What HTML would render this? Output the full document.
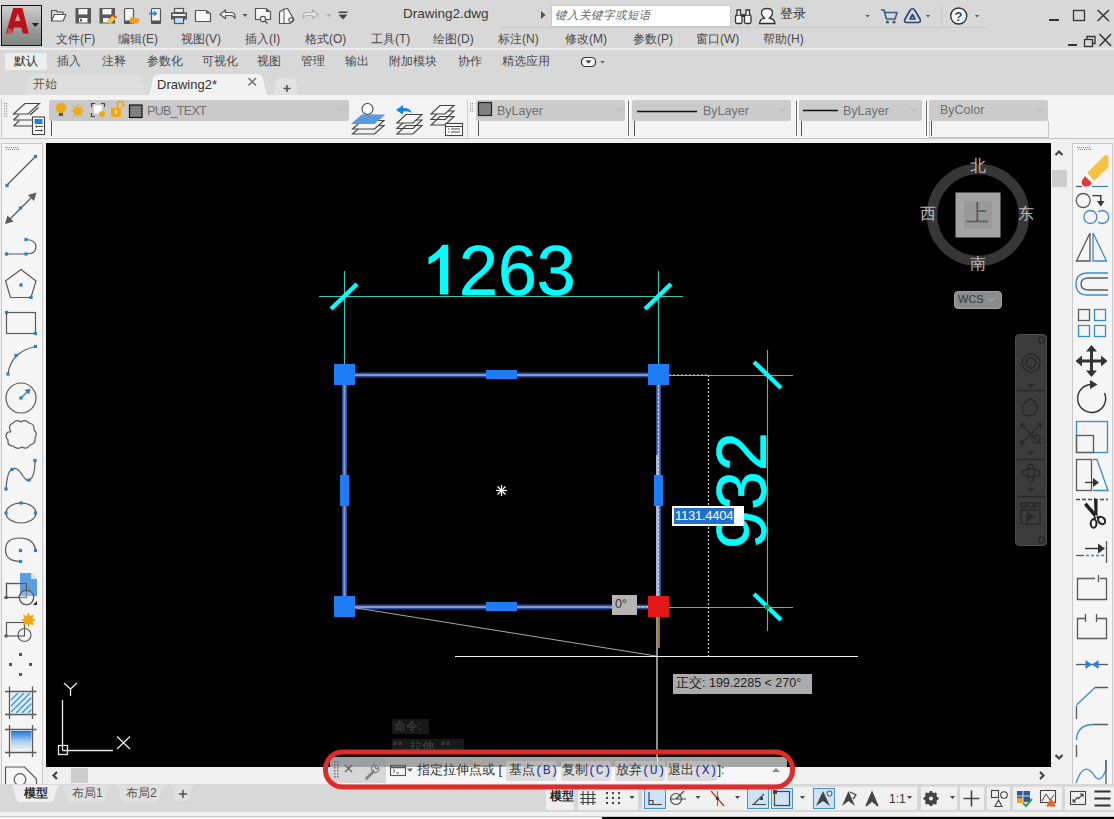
<!DOCTYPE html>
<html><head><meta charset="utf-8">
<style>
*{margin:0;padding:0;box-sizing:border-box}
html,body{width:1114px;height:819px;overflow:hidden;background:#d9d9d9;font-family:"Liberation Sans",sans-serif;position:relative}
.a{position:absolute}
.t{position:absolute;white-space:nowrap;line-height:1}
svg{position:absolute;overflow:visible}
</style></head><body>
<!-- title bar -->
<div class="a" style="left:0;top:0;width:1114px;height:49px;background:#d8d8d8"></div>
<div class="a" style="left:0;top:48px;width:1114px;height:2px;background:#ececec"></div>
<!-- ribbon tabs row -->
<div class="a" style="left:0;top:50px;width:1114px;height:22px;background:#d8d8d8"></div>
<div class="a" style="left:5px;top:53px;width:42px;height:17px;background:#eeeeee"></div>
<!-- file tabs row -->
<div class="a" style="left:0;top:72px;width:1114px;height:23px;background:#d8d8d8"></div>
<!-- toolbar row -->
<div class="a" style="left:0;top:98px;width:1114px;height:41px;background:#f3f3f3;border-bottom:1px solid #c4c4c4"></div>
<div class="a" style="left:0;top:139px;width:1114px;height:4px;background:#f0f0f0"></div>
<div class="t" style="left:56px;top:33px;font-size:12px;color:#4a4a4a;">文件(F)</div>
<div class="t" style="left:118px;top:33px;font-size:12px;color:#4a4a4a;">编辑(E)</div>
<div class="t" style="left:181px;top:33px;font-size:12px;color:#4a4a4a;">视图(V)</div>
<div class="t" style="left:245px;top:33px;font-size:12px;color:#4a4a4a;">插入(I)</div>
<div class="t" style="left:305px;top:33px;font-size:12px;color:#4a4a4a;">格式(O)</div>
<div class="t" style="left:371px;top:33px;font-size:12px;color:#4a4a4a;">工具(T)</div>
<div class="t" style="left:433px;top:33px;font-size:12px;color:#4a4a4a;">绘图(D)</div>
<div class="t" style="left:498px;top:33px;font-size:12px;color:#4a4a4a;">标注(N)</div>
<div class="t" style="left:565px;top:33px;font-size:12px;color:#4a4a4a;">修改(M)</div>
<div class="t" style="left:633px;top:33px;font-size:12px;color:#4a4a4a;">参数(P)</div>
<div class="t" style="left:696px;top:33px;font-size:12px;color:#4a4a4a;">窗口(W)</div>
<div class="t" style="left:763px;top:33px;font-size:12px;color:#4a4a4a;">帮助(H)</div>
<div class="t" style="left:14px;top:55px;font-size:12px;color:#222;">默认</div>
<div class="t" style="left:57px;top:55px;font-size:12px;color:#4a4a4a;">插入</div>
<div class="t" style="left:102px;top:55px;font-size:12px;color:#4a4a4a;">注释</div>
<div class="t" style="left:147px;top:55px;font-size:12px;color:#4a4a4a;">参数化</div>
<div class="t" style="left:202px;top:55px;font-size:12px;color:#4a4a4a;">可视化</div>
<div class="t" style="left:257px;top:55px;font-size:12px;color:#4a4a4a;">视图</div>
<div class="t" style="left:301px;top:55px;font-size:12px;color:#4a4a4a;">管理</div>
<div class="t" style="left:345px;top:55px;font-size:12px;color:#4a4a4a;">输出</div>
<div class="t" style="left:389px;top:55px;font-size:12px;color:#4a4a4a;">附加模块</div>
<div class="t" style="left:458px;top:55px;font-size:12px;color:#4a4a4a;">协作</div>
<div class="t" style="left:502px;top:55px;font-size:12px;color:#4a4a4a;">精选应用</div>
<div class="t" style="left:403px;top:7px;font-size:13.5px;color:#3a3a3a;">Drawing2.dwg</div>
<div class="t" style="left:780px;top:7px;font-size:13px;color:#333;">登录</div>

<svg width="30" height="20" style="left:578px;top:52px"><rect x="3.5" y="5.5" width="14" height="9" rx="4" fill="#fafafa" stroke="#333" stroke-width="1.2"/><path d="M7.5 8.5 H13.5 L10.5 11.5 Z" fill="#333"/><path d="M22.5 9 H26.5 L24.5 11.5 Z" fill="#555"/></svg>
<!-- title icons -->
<div class="a" style="left:1px;top:5px;width:41px;height:41px;border:1px solid #111;background:linear-gradient(#cfcfcf,#9a9a9a 60%,#7f8583)"></div>
<svg width="1114" height="50" style="left:0;top:0">
<path d="M6 33.6 L13.2 8 H22.4 L28.7 33.6 H22.8 L21.3 27.5 H13.9 L12.2 33.6 Z M15.2 21 H20.2 L17.7 14 Z" fill="#b8121a"/>
<path d="M15.2 21 H20.2 L17.7 14 Z" fill="#e0a0a0"/><path d="M7 33 L8.5 28 L12.5 30 L12 33.6 Z" fill="#d87a80" opacity="0.6"/>
<path d="M31.7 23 H39 L35.3 27 Z" fill="#222"/>
<!-- open -->
<g fill="none" stroke="#555" stroke-width="1.2" stroke-linejoin="round">
<path d="M51.5 21 V10.5 H56 L57.5 12 H63 V14.5"/>
<path d="M51.5 21 L54.5 14.5 H66 L63 21 Z" fill="#fff"/>
</g>
<!-- save -->
<rect x="75.5" y="8" width="15.5" height="15.5" fill="#585858"/>
<rect x="78.5" y="9" width="9" height="5.5" fill="#f4f4f4"/>
<rect x="79" y="18" width="8.5" height="4.5" fill="#f4f4f4"/>
<rect x="80" y="19" width="2" height="2.5" fill="#585858"/>
<!-- saveas -->
<rect x="99.5" y="8" width="15.5" height="15.5" fill="#585858"/>
<rect x="102.5" y="9" width="9" height="5.5" fill="#f4f4f4"/>
<rect x="103" y="18" width="6" height="4.5" fill="#f4f4f4"/>
<path d="M107 21.5 L112.5 15.5 L116 18.5 L110.5 24 Z" fill="#f2c230"/>
<path d="M112.5 15.5 L114 14 L117 17 L116 18.5 Z" fill="#e04040"/>
<!-- mobile open -->
<rect x="124.5" y="8.5" width="9" height="15" rx="1" fill="#f4f4f4" stroke="#555" stroke-width="1.2"/>
<rect x="124.5" y="20.5" width="9" height="3" fill="#555"/>
<path d="M130 17.5 H134 L135 18.5 H140 L138.5 23.5 H130 Z" fill="#f0a020"/>
<!-- mobile save -->
<rect x="151.5" y="8.5" width="9" height="15" rx="1" fill="#f4f4f4" stroke="#555" stroke-width="1.2"/>
<rect x="151.5" y="20.5" width="9" height="3" fill="#555"/>
<path d="M149 12.5 H154 V10.5 L157.5 13.5 L154 16.5 V14.5 H149 Z" fill="#2a8ae0"/>
<!-- print -->
<rect x="174.5" y="8.5" width="9" height="4" fill="#f4f4f4" stroke="#555" stroke-width="1.2"/>
<rect x="171" y="12.5" width="16" height="7" fill="#585858"/>
<rect x="172.5" y="14" width="13" height="2" fill="#f0f0f0"/>
<rect x="174.5" y="17.5" width="9" height="6" fill="#bfe0f8" stroke="#555" stroke-width="1.2"/>
<!-- publish -->
<path d="M195.5 10.5 H206 L210.5 13.5 V21.5 H195.5 Z" fill="#f6f6f6" stroke="#555" stroke-width="1.2"/>
<path d="M206 10.5 L210.5 13.5 H206 Z" fill="#555"/>
<!-- undo -->
<path d="M220 14.5 L225.5 10 V12.5 H231 Q235 12.5 235 16.5 V18.5 Q233.5 15.5 231 15.5 H225.5 V18.5 Z" fill="#f8f8f8" stroke="#555" stroke-width="1.2" stroke-linejoin="round"/>
<path d="M242.5 14 H247.5 L245 17 Z" fill="#555"/>
<!-- plot preview -->
<path d="M255.5 8.5 H266 L270.5 12 V19.5 H255.5 Z" fill="#f6f6f6" stroke="#555" stroke-width="1.2"/>
<path d="M266 8.5 L270.5 12 H266 Z" fill="#555"/>
<circle cx="263" cy="19" r="2.6" fill="#f6f6f6" stroke="#555" stroke-width="1.2"/>
<line x1="265" y1="21" x2="267.5" y2="23.5" stroke="#555" stroke-width="1.3"/>
<!-- sheet set -->
<path d="M279.5 12 L284 9 L287.5 8.5 L294 19.5 L290 23.5 H279.5 Z" fill="#f6f6f6" stroke="#555" stroke-width="1.2" stroke-linejoin="round"/>
<path d="M284 9 V23" stroke="#555" stroke-width="1" fill="none"/>
<circle cx="291" cy="20" r="2.2" fill="none" stroke="#555" stroke-width="1.1"/>
<!-- redo -->
<path d="M318 14.5 L312.5 10 V12.5 H307 Q303 12.5 303 16.5 V18.5 Q304.5 15.5 307 15.5 H312.5 V18.5 Z" fill="#e8e8e8" stroke="#b0b0b0" stroke-width="1.2" stroke-linejoin="round"/>
<path d="M326.5 14 H331.5 L329 17 Z" fill="#aaa"/>
<!-- customize -->
<rect x="338.5" y="11.5" width="9" height="1.5" fill="#444"/>
<path d="M338.5 14.5 H347.5 L343 19.5 Z" fill="#444"/>
<!-- play arrow -->
<path d="M541 11 L545.5 15 L541 19 Z" fill="#555"/>
<!-- binoculars -->
<g fill="#f4f4f4" stroke="#333" stroke-width="1.3">
<rect x="735.5" y="15" width="6.5" height="8.5" rx="1.5"/>
<rect x="744.5" y="15" width="6.5" height="8.5" rx="1.5"/>
<path d="M737 15 V10 H740.5 V15 M746 15 V10 H749.5 V15"/>
</g>
<rect x="741.5" y="14" width="3.5" height="3" fill="#333"/>
<!-- user -->
<g fill="#f6f6f6" stroke="#333" stroke-width="1.3">
<path d="M759.5 23.5 Q760 19 764.5 18 Q761.5 16 761.5 12.5 Q761.5 8.5 767 8.5 Q772.5 8.5 772.5 12.5 Q772.5 16 769.5 18 Q774.5 19 775 23.5 Z"/>
</g>
<path d="M865.5 15 H869.5 L867.5 17.5 Z" fill="#555"/>
<!-- cart -->
<g fill="none" stroke="#3a5d80" stroke-width="1.6" stroke-linejoin="round">
<path d="M881 10 H884 L886.5 19 H895 L897 12.5 H885"/>
</g>
<circle cx="887.5" cy="22" r="1.6" fill="#3a5d80"/>
<circle cx="894" cy="22" r="1.6" fill="#3a5d80"/>
<!-- a360 -->
<g fill="none" stroke="#2a4670" stroke-width="1.6" stroke-linejoin="round">
<path d="M910 10.5 Q912.5 7 915 10.5 L920 19 Q921.5 22.5 918 22.5 H907 Q903.5 22.5 905 19 Z"/>
<path d="M912.5 14.5 L910 19 H915 Z"/>
</g>
<path d="M926 15 H930 L928 17.5 Z" fill="#555"/>
<line x1="941.5" y1="6" x2="941.5" y2="25" stroke="#c4c4c4"/>
<!-- help -->
<circle cx="958.7" cy="16" r="8" fill="#fafafa" stroke="#333" stroke-width="1.4"/>
<text x="954.5" y="21" font-family="Liberation Sans" font-weight="bold" font-size="13" fill="#1a4fa0">?</text>
<path d="M975 15 H979 L977 17.5 Z" fill="#555"/>
<line x1="500" y1="27.5" x2="985" y2="27.5" stroke="#c8c8c8"/>
<!-- window controls -->
<rect x="1049" y="19" width="10" height="2" fill="#333"/>
<rect x="1073.5" y="10.5" width="11" height="10" fill="none" stroke="#333" stroke-width="1.3"/>
<path d="M1097.5 10 L1109 21 M1109 10 L1097.5 21" stroke="#333" stroke-width="1.5"/>
<rect x="1068" y="44" width="9" height="2" fill="#333"/>
<rect x="1084.5" y="39.5" width="8" height="7" fill="none" stroke="#333" stroke-width="1.3"/>
<path d="M1087 39.5 V36.5 H1095 V43.5 H1092.5" fill="none" stroke="#333" stroke-width="1.3"/>
<path d="M1099.5 34 L1111 46 M1111 34 L1099.5 46" stroke="#333" stroke-width="1.5"/>
</svg>
<div class="a" style="left:551px;top:5px;width:180px;height:22px;background:#fff;border:1px solid #c8c8c8"></div>
<div class="t" style="left:555px;top:10px;font-size:11.5px;color:#666;font-style:italic">键入关键字或短语</div>

<!-- file tabs -->
<svg width="320" height="27" style="left:0;top:72px">
<path d="M20 25 Q24 25 25 20 L28 6 Q30 2 36 2 H136 Q141 2 142 6 L145 20 Q146 25 150 25 Z" fill="#dedede"/>
<path d="M144 26 Q149 26 150 20 L153 6 Q155 2 161 2 H256 Q262 2 263 6 L266 20 Q267 26 273 26 Z" fill="#f2f2f2"/>
<path d="M270 25 Q273 25 274 20 L276 9 Q277 6 281 6 H292 Q296 6 296 9 L297 20 Q298 25 301 25 Z" fill="#e2e2e2"/>
<path d="M248.5 78 L256 85.5 M256 78 L248.5 85.5" transform="translate(0,-72)" stroke="#777" stroke-width="1.6"/>
<path d="M287 13 V20 M283.5 16.5 H290.5" stroke="#555" stroke-width="1.6"/>
</svg>
<div class="a" style="left:0;top:95px;width:1114px;height:5px;background:#f2f2f2"></div>
<div class="t" style="left:33px;top:78px;font-size:12px;color:#555">开始</div>
<div class="t" style="left:157px;top:78px;font-size:13px;color:#333">Drawing2*</div>
<!-- toolbar row content -->
<div class="a" style="left:1px;top:99px;width:1048px;height:40px;border-left:1px solid #c8c8c8"></div>
<div class="a" style="left:49px;top:100px;width:300px;height:21px;background:#c9c9c9;border-radius:2px"></div>
<div class="a" style="left:51px;top:121px;width:1px;height:15px;background:#555"></div>
<div class="a" style="left:476px;top:100px;width:149px;height:21px;background:#cbcbcb;border-radius:2px"></div>
<div class="a" style="left:478px;top:121px;width:1px;height:15px;background:#555"></div>
<div class="a" style="left:632px;top:100px;width:159px;height:21px;background:#cbcbcb;border-radius:2px"></div>
<div class="a" style="left:634px;top:121px;width:1px;height:15px;background:#555"></div>
<div class="a" style="left:799px;top:100px;width:123px;height:21px;background:#cbcbcb;border-radius:2px"></div>
<div class="a" style="left:801px;top:121px;width:1px;height:15px;background:#555"></div>
<div class="a" style="left:929px;top:100px;width:119px;height:21px;background:#cbcbcb;border-radius:2px"></div>
<div class="a" style="left:929px;top:121px;width:120px;height:17px;border:1px solid #c4c4c4;border-top:none;background:#f3f3f3"></div>
<div class="a" style="left:931px;top:121px;width:1px;height:15px;background:#555"></div>
<div class="t" style="left:147px;top:105px;font-size:12.5px;color:#707070;letter-spacing:-0.7px">PUB_TEXT</div>
<div class="t" style="left:497px;top:105px;font-size:12.5px;color:#707070">ByLayer</div>
<div class="t" style="left:703px;top:105px;font-size:12.5px;color:#707070">ByLayer</div>
<div class="t" style="left:843px;top:105px;font-size:12.5px;color:#707070">ByLayer</div>
<div class="t" style="left:940px;top:104px;font-size:12.5px;color:#707070">ByColor</div>
<svg width="1114" height="50" style="left:0;top:96px">
<g fill="#999"><rect x="4" y="7" width="1.2" height="1.2"/><rect x="6" y="7" width="1.2" height="1.2"/><rect x="4" y="9.5" width="1.2" height="1.2"/><rect x="6" y="9.5" width="1.2" height="1.2"/><rect x="4" y="12" width="1.2" height="1.2"/><rect x="6" y="12" width="1.2" height="1.2"/><rect x="4" y="14.5" width="1.2" height="1.2"/><rect x="6" y="14.5" width="1.2" height="1.2"/><rect x="4" y="17" width="1.2" height="1.2"/><rect x="6" y="17" width="1.2" height="1.2"/><rect x="4" y="19.5" width="1.2" height="1.2"/><rect x="6" y="19.5" width="1.2" height="1.2"/></g>
<g fill="none" stroke="#444" stroke-width="1.1">
<path d="M13.5 18 L25 7.5 H39.5 L28 18 Z" fill="#f6f6f6"/>
<path d="M13.5 24 L19 19 M30 19 L38.5 11.5"/>
<path d="M13.5 24 H32 M13.5 30 L19 25 M13.5 30 H32"/>
</g>
<rect x="32.5" y="21" width="12" height="17.5" fill="#fff" stroke="#444" stroke-width="1.1"/>
<rect x="34.5" y="23" width="8" height="5" fill="#1a82e8"/>
<path d="M36 30.5 H43 M35 34.5 H42" stroke="#444" stroke-width="1"/><path d="M35 30.5 L37 29 V32 Z M43 34.5 L41 33 V36 Z" fill="#444"/>
<!-- bulb -->
<circle cx="61" cy="12" r="5.2" fill="#f2a81a"/>
<rect x="59" y="17" width="4" height="3" fill="#555"/>
<!-- sun -->
<circle cx="77.8" cy="15" r="4.5" fill="#f2a81a"/>
<g stroke="#f2a81a" stroke-width="1.2"><path d="M77.8 8 V10 M77.8 20 V22 M71 15 H73 M82.5 15 H84.5 M73 10 L74.4 11.4 M81.2 18.6 L82.6 20 M73 20 L74.4 18.6 M81.2 11.4 L82.6 10"/></g>
<!-- freeze vp -->
<path d="M91.5 11 V7.5 H95 M101 7.5 H104.5 V11 M91.5 17 V20.5 H95" fill="none" stroke="#444" stroke-width="1.2"/>
<rect x="94" y="9.5" width="8" height="8" fill="#fff"/>
<circle cx="102" cy="18" r="3" fill="#f2a81a"/>
<!-- lock -->
<rect x="111" y="12" width="10" height="9" fill="#f2a81a"/>
<path d="M117.5 12 V8.5 Q117.5 5.5 120.5 5.5 Q123.5 5.5 123.5 8.5 V11" fill="none" stroke="#f2a81a" stroke-width="2"/>
<rect x="115.5" y="14" width="1" height="4" fill="#fff"/>
<!-- color square -->
<rect x="129.5" y="9" width="12.5" height="12.5" fill="#808080" stroke="#111" stroke-width="1.2"/>
<rect x="478.5" y="6.5" width="13" height="13" fill="#808080" stroke="#222" stroke-width="1.2"/>
<line x1="637" y1="15.5" x2="697" y2="15.5" stroke="#111" stroke-width="1.3"/>
<line x1="803" y1="14.5" x2="838" y2="14.5" stroke="#111" stroke-width="1.3"/>
<g fill="none" stroke="#b0b0b0" stroke-width="1"><path d="M337 12 L340 15 L343 12 M616.5 12 L619.5 15 L622.5 12 M779 12 L782 15 L785 12 M911 12 L914 15 L917 12 M1037 12 L1040 15 L1043 12"/></g>
<!-- layer match etc -->
<g fill="none" stroke="#444" stroke-width="1.1">
<path d="M352.5 38 L362 29.5 H384 L374.5 38 Z"/>
<path d="M352.5 33 L362 24.5 H384 L374.5 33 Z" fill="#f6f6f6"/>
<path d="M352.5 27.5 L362 19 H384 L374.5 27.5 Z" fill="#5a9ae0" stroke="#5a9ae0"/>
<circle cx="367.5" cy="13" r="5.5" fill="#fff"/>
<path d="M397 38 L406 29.5 H422 L413 38 Z M397 32.5 L406 24 H422 L413 32.5 Z" />
<path d="M397 27 L406 18.5 H422 L413 27 Z" fill="#f6f6f6"/>
<path d="M431 29 L440 20.5 H454 L445 29 Z M431 23.5 L440 15 H454 L445 23.5 Z" />
<path d="M431 18 L440 9.5 H454 L445 18 Z" fill="#f6f6f6"/>
</g>
<path d="M396 14 L403 9 V12 Q410 11.5 412 17 Q408 14.5 403 15.5 V18.5 Z" fill="#1a82e8"/>
<rect x="445.5" y="27.5" width="17" height="12" fill="#fff" stroke="#444" stroke-width="1.1"/>
<path d="M445.5 30.5 H462.5 M448 33 H449.5 M451 33 H460 M448 36 H449.5 M451 36 H460" stroke="#444" stroke-width="1"/>
<line x1="467.5" y1="3" x2="467.5" y2="42" stroke="#d0d0d0"/>
<g fill="#999"><rect x="470" y="7" width="1.2" height="1.2"/><rect x="472" y="7" width="1.2" height="1.2"/><rect x="470" y="9.5" width="1.2" height="1.2"/><rect x="472" y="9.5" width="1.2" height="1.2"/><rect x="470" y="12" width="1.2" height="1.2"/><rect x="472" y="12" width="1.2" height="1.2"/><rect x="470" y="14.5" width="1.2" height="1.2"/><rect x="472" y="14.5" width="1.2" height="1.2"/></g>
<g stroke="#fafafa" stroke-width="3"><path d="M628.5 3 V41 M796.5 3 V41 M926.5 3 V41"/></g><g stroke="#6e6e6e" stroke-width="1"><path d="M628.5 4.5 V40 M796.5 4.5 V40 M926.5 4.5 V40"/></g>
</svg>
<!-- canvas -->
<div class="a" id="cv" style="left:46px;top:143px;width:1005px;height:624px;background:#000"></div>

<!-- canvas drawing -->
<svg class="a" style="left:0;top:0" width="1114" height="819" viewBox="0 0 1114 819">
<defs><clipPath id="cc"><rect x="46" y="143" width="1005" height="624"/></clipPath></defs>
<g clip-path="url(#cc)">
<!-- horizontal dimension -->
<g stroke="#3cc4b4" stroke-width="1.1" fill="none">
<line x1="319" y1="296.5" x2="683" y2="296.5"/>
<line x1="344.5" y1="271" x2="344.5" y2="374"/>
<line x1="658.5" y1="271" x2="658.5" y2="374"/>
<line x1="668" y1="375.5" x2="793" y2="375.5"/>
<line x1="669" y1="607.5" x2="793" y2="607.5"/>
<line x1="767.5" y1="350" x2="767.5" y2="631"/>
</g>
<g stroke="#00ffff" stroke-width="4.5" stroke-linecap="butt">
<line x1="331" y1="309" x2="357" y2="284"/>
<line x1="645" y1="309" x2="671" y2="284"/>
<line x1="754" y1="362" x2="781" y2="388"/>
<line x1="754" y1="594" x2="781" y2="620"/>
</g>
<circle cx="767" cy="607" r="2.5" fill="#1a9a3a"/>
<g fill="#00ffff" stroke="#00ffff" stroke-width="0.5" font-family="Liberation Sans" font-size="70">
<text x="459" y="294.5">263</text>
<path d="M440 294.5 V257 Q435 262 428.5 264.5 V257.5 Q438 252 442.5 244.8 H448.3 V294.5 Z" stroke="none"/>
<text transform="translate(765.5,549) rotate(-90)">932</text>
</g>
<!-- rectangle highlighted -->
<g fill="none">
<path d="M344.5 375 H658.5 V607 H344.5 Z" stroke="#2a4a9c" stroke-width="5"/>
<path d="M344.5 375 H658.5 V607 H344.5 Z" stroke="#8596c8" stroke-width="2"/>
</g>
<!-- dotted lines -->
<g stroke="#d0d0d0" stroke-width="1.2" stroke-dasharray="2 2" fill="none">
<line x1="669" y1="375" x2="708" y2="375"/>
<line x1="708.5" y1="375" x2="708.5" y2="657"/>
<line x1="658.5" y1="385" x2="658.5" y2="596"/>
<line x1="638" y1="606.5" x2="668" y2="606.5"/>
</g>
<!-- rubber band -->
<line x1="344" y1="606" x2="656" y2="656" stroke="#a8a8a8" stroke-width="1"/>
<line x1="455" y1="656.5" x2="858" y2="656.5" stroke="#f0f0f0" stroke-width="1.2"/>
<line x1="657" y1="455" x2="657" y2="767" stroke="#f0f0f0" stroke-width="1.2"/>
<line x1="659" y1="617" x2="659" y2="648" stroke="#c8a020" stroke-width="1.5"/>
<!-- grips -->
<g fill="#1e7cf5">
<rect x="334" y="364" width="21" height="21"/>
<rect x="648" y="364" width="21" height="21"/>
<rect x="334" y="596" width="21" height="21"/>
<rect x="486" y="370" width="31" height="9"/>
<rect x="486" y="602" width="31" height="9"/>
<rect x="340" y="475" width="9" height="31"/>
<rect x="654" y="475" width="9" height="31"/>
</g>
<rect x="648" y="596" width="21" height="21" fill="#e01818"/>
<!-- center mark -->
<g stroke="#fff" stroke-width="1.2">
<line x1="496" y1="490.5" x2="507" y2="490.5"/>
<line x1="501.5" y1="485" x2="501.5" y2="496"/>
<line x1="497.5" y1="486.5" x2="505.5" y2="494.5"/>
<line x1="505.5" y1="486.5" x2="497.5" y2="494.5"/>
</g>
<!-- viewcube -->
<circle cx="978" cy="215" r="46" fill="none" stroke="#363636" stroke-width="10.5"/>
<rect x="955.5" y="192.5" width="45" height="45" fill="#a3a3a3"/>
<rect x="964" y="201" width="28" height="28" fill="#999"/>
<!-- UCS icon -->
<g stroke="#e8e8e8" stroke-width="1.3" fill="none">
<line x1="62.5" y1="700" x2="62.5" y2="750.5"/>
<line x1="62.5" y1="750.5" x2="113" y2="750.5"/>
<rect x="58.5" y="745.5" width="9" height="9"/>
<path d="M64 683 L70.5 689 L77 683 M70.5 689 V696"/>
<path d="M117 736.5 L130 749 M130 736.5 L117 749"/>
</g>
</g>
</svg>

<!-- overlays on canvas -->
<div class="t" style="left:920px;top:206px;font-size:16px;color:#b8b8b8">西</div>
<div class="t" style="left:1018px;top:206px;font-size:16px;color:#b8b8b8">东</div>
<div class="t" style="left:970px;top:158px;font-size:16px;color:#b8b8b8">北</div>
<div class="t" style="left:970px;top:256px;font-size:16px;color:#b8b8b8">南</div>
<div class="t" style="left:966px;top:202px;font-size:23px;color:#5a5a5a">上</div>
<div class="a" style="left:954px;top:291px;width:48px;height:18px;border-radius:4px;background:#8c8c8c;border:1px solid #a0a0a0"></div>
<div class="t" style="left:958px;top:294px;font-size:11px;color:#3a3a3a">WCS</div>
<svg width="20" height="10" style="left:985px;top:296px"><path d="M3 2 L6 5 L9 2" fill="none" stroke="#b0b0b0" stroke-width="1"/></svg>
<!-- nav bar -->
<div class="a" style="left:1015px;top:334px;width:32px;height:212px;border-radius:4px;background:#3c3c3c;border:1px solid #4a4a4a"></div>
<svg width="40" height="220" style="left:1010px;top:330px"><g transform="translate(-1010,-330)" fill="none" stroke="#262626" stroke-width="1.3" opacity="0.9">
<circle cx="1041.5" cy="340" r="3"/><circle cx="1041.5" cy="540" r="3"/>
<circle cx="1031" cy="363" r="9"/><circle cx="1031" cy="363" r="5"/>
<path d="M1029 385 H1033 L1031 387 Z" fill="#2a2a2a"/>
<line x1="1017" y1="390.5" x2="1045" y2="390.5"/>
<path d="M1023 413 Q1021 405 1024 404 Q1025 400 1027 402 Q1028 397 1030 400 Q1032 397 1033 401 Q1036 400 1035 405 Q1039 403 1037 410 Q1034 416 1028 416 Q1025 416 1023 413"/>
<path d="M1021 424 L1041 444 M1041 424 L1021 444 M1021 424 H1025 M1021 424 V428 M1041 424 H1037 M1041 424 V428 M1021 444 V440 M1021 444 H1025"/>
<circle cx="1036" cy="439" r="4"/>
<path d="M1029 452 H1033 L1031 454 Z" fill="#2a2a2a"/>
<line x1="1017" y1="459.5" x2="1045" y2="459.5"/>
<ellipse cx="1031" cy="473" rx="9" ry="4"/><ellipse cx="1031" cy="473" rx="3" ry="9"/>
<path d="M1029 489 H1033 L1031 491 Z" fill="#2a2a2a"/>
<line x1="1017" y1="496.5" x2="1045" y2="496.5"/>
<rect x="1021" y="503" width="5" height="4"/><rect x="1028" y="503" width="5" height="4"/><rect x="1035" y="503" width="5" height="4"/>
<rect x="1021" y="510" width="19" height="14"/><path d="M1027 513 L1034 517 L1027 521 Z" fill="#2a2a2a"/>
</g></svg>
<!-- input + labels -->
<div class="a" style="left:672px;top:506px;width:72px;height:20px;background:#fff"></div>
<div class="a" style="left:674px;top:508px;width:60px;height:16px;background:#1f6fd0"></div>
<div class="t" style="left:675px;top:509px;font-size:13px;color:#fff;letter-spacing:-0.25px">1131.4404</div>
<div class="a" style="left:612px;top:595px;width:25px;height:20px;background:#b4b4b4"></div>
<div class="t" style="left:615px;top:598px;font-size:12.5px;color:#333">0°</div>
<div class="a" style="left:673px;top:674px;width:139px;height:20px;background:#acacac"></div>
<div class="t" style="left:676px;top:677px;font-size:12.5px;color:#222">正交: 199.2285 &lt; 270°</div>
<!-- command history -->
<div class="a" style="left:392px;top:719px;width:37px;height:15px;background:#181818"></div>
<div class="t" style="left:394px;top:720px;font-size:12px;color:#454545">命令:</div>
<div class="a" style="left:392px;top:739px;width:72px;height:15px;background:#181818"></div>
<div class="t" style="left:393px;top:740px;font-size:12px;color:#454545;word-spacing:4px">** 拉伸 **</div>
<!-- left toolbar -->
<div class="a" style="left:0;top:143px;width:46px;height:642px;background:#f0f0f0"></div>
<div class="a" style="left:1px;top:143px;width:42px;height:642px;background:#f5f5f5;border:1px solid #c8c8c8;border-bottom:none"></div>
<svg width="46" height="650" style="left:0;top:140px"><g transform="translate(0,-140)">
<g fill="#777"><rect x="5" y="147" width="1" height="1"/><rect x="6" y="149" width="1" height="1"/><rect x="7" y="147" width="1" height="1"/><rect x="8" y="149" width="1" height="1"/><rect x="9" y="147" width="1" height="1"/><rect x="10" y="149" width="1" height="1"/><rect x="11" y="147" width="1" height="1"/><rect x="12" y="149" width="1" height="1"/><rect x="13" y="147" width="1" height="1"/><rect x="14" y="149" width="1" height="1"/><rect x="15" y="147" width="1" height="1"/><rect x="16" y="149" width="1" height="1"/><rect x="17" y="147" width="1" height="1"/><rect x="18" y="149" width="1" height="1"/></g>
<g fill="none" stroke="#5a5a5a" stroke-width="1.2"><line x1="7" y1="185" x2="35.5" y2="156.5"/><line x1="9" y1="220" x2="33" y2="196"/><path d="M6.5 254 H26 M26 239.5 Q36 240 36 247 Q36 254 26 254"/><path d="M21 269.5 L36 281 L31 297.5 H10.5 L5.5 281 Z"/><rect x="6.5" y="312.5" width="29" height="21"/><path d="M8 374 Q11 352 35.5 346.5"/><circle cx="21" cy="398" r="15"/><path d="M11 432 Q7 426 13 423 Q16 419 21 422 Q25 419 29 423 Q35 424 34 430 Q38 433 35 438 Q36 444 30 445 Q27 450 22 447 Q17 450 13 446 Q7 446 8 440 Q4 436 8 432 Q9 432 11 432"/><path d="M6 489 Q7 472 12 469 Q17 466 23 476 Q27 482 29 480 Q35 478 35 460"/><ellipse cx="21" cy="513" rx="15" ry="10"/><path d="M35.5 549 Q33 538 20 538 Q5.5 538 5.5 550 Q5.5 561 20.5 561.5"/><rect x="6.5" y="583.5" width="20" height="14"/><circle cx="26.5" cy="597.5" r="7.2" fill="none"/><rect x="6.5" y="622.5" width="18" height="13.5"/><circle cx="24.5" cy="635" r="6.5"/><path d="M5 691.5 H36.5 M5 714.5 H36.5 M9.5 686.5 V719 M32.5 686.5 V719" stroke-width="1.3"/><path d="M5 729.5 H36.5 M5 752.5 H36.5 M9.5 725 V757 M32.5 725 V757" stroke-width="1.3"/><path d="M5.5 785 V767 H24.5 L36.5 779 V785"/><circle cx="20" cy="779.5" r="5.8"/></g>
<path d="M36.5 192.5 L34 201 L28 195 Z M5 224 L7.5 215.5 L13.5 221.5 Z" fill="#5a5a5a"/><path d="M21 398 L29 390" stroke="#2f7fc0" stroke-width="1.3"/><path d="M30.5 388.5 L24.5 390 L29 394.5 Z" fill="#2f7fc0"/><path d="M20 573 H31 L37 579 V596 H20 Z" fill="#5a9ee0"/><path d="M31 573 V579 H37 Z" fill="#d6e8f8"/><path d="M33 605 L37 601 V605 Z" fill="#222"/><rect x="6.5" y="583.5" width="20" height="14" fill="none" stroke="#5a5a5a" stroke-width="1.2"/><circle cx="26.5" cy="597.5" r="7.2" fill="#f5f5f5" fill-opacity="0.3" stroke="#5a5a5a" stroke-width="1.2"/><path d="M28.5 612 L30 616 L34 614.5 L32.5 618.5 L36 620 L32.5 621.5 L34 625.5 L30 624 L28.5 627.5 L27 624 L23 625.5 L24.5 621.5 L21 620 L24.5 618.5 L23 614.5 L27 616 Z" fill="#f2a412"/><rect x="11" y="693" width="20.5" height="20" fill="#dcedf9"/><g stroke="#3a8ad0" stroke-width="1.2" clip-path="url(#hc)"><path d="M11 700 L18 693 M11 706 L24 693 M11 712 L30 693 M16 713 L31.5 697.5 M22 713 L31.5 703.5 M28 713 L31.5 709.5"/></g><defs><clipPath id="hc"><rect x="11" y="693" width="20.5" height="20"/></clipPath><linearGradient id="gr" x1="0" y1="0" x2="0" y2="1"><stop offset="0" stop-color="#1674dc"/><stop offset="0.5" stop-color="#a8cdf0"/><stop offset="1" stop-color="#f4f4f4"/></linearGradient></defs><rect x="11" y="731" width="20.5" height="20" fill="url(#gr)"/><rect x="5.4" y="183.9" width="3.2" height="3.2" fill="#2f7fc0"/><rect x="33.9" y="154.9" width="3.2" height="3.2" fill="#2f7fc0"/><rect x="18.9" y="206.4" width="3.2" height="3.2" fill="#2f7fc0"/><rect x="4.9" y="252.4" width="3.2" height="3.2" fill="#2f7fc0"/><rect x="24.4" y="252.4" width="3.2" height="3.2" fill="#2f7fc0"/><rect x="24.4" y="237.9" width="3.2" height="3.2" fill="#2f7fc0"/><rect x="19.4" y="283.4" width="3.2" height="3.2" fill="#2f7fc0"/><rect x="29.4" y="295.9" width="3.2" height="3.2" fill="#2f7fc0"/><rect x="4.9" y="310.9" width="3.2" height="3.2" fill="#2f7fc0"/><rect x="33.9" y="331.9" width="3.2" height="3.2" fill="#2f7fc0"/><rect x="6.4" y="372.4" width="3.2" height="3.2" fill="#2f7fc0"/><rect x="14.4" y="353.9" width="3.2" height="3.2" fill="#2f7fc0"/><rect x="33.9" y="344.9" width="3.2" height="3.2" fill="#2f7fc0"/><rect x="19.4" y="396.4" width="3.2" height="3.2" fill="#2f7fc0"/><rect x="4.4" y="487.4" width="3.2" height="3.2" fill="#2f7fc0"/><rect x="10.4" y="467.9" width="3.2" height="3.2" fill="#2f7fc0"/><rect x="27.4" y="478.4" width="3.2" height="3.2" fill="#2f7fc0"/><rect x="33.4" y="458.9" width="3.2" height="3.2" fill="#2f7fc0"/><rect x="4.4" y="511.4" width="3.2" height="3.2" fill="#2f7fc0"/><rect x="19.4" y="501.4" width="3.2" height="3.2" fill="#2f7fc0"/><rect x="33.9" y="511.4" width="3.2" height="3.2" fill="#2f7fc0"/><rect x="18.9" y="548.9" width="3.2" height="3.2" fill="#2f7fc0"/><rect x="33.9" y="548.9" width="3.2" height="3.2" fill="#2f7fc0"/><rect x="18.9" y="559.9" width="3.2" height="3.2" fill="#2f7fc0"/><rect x="4.5" y="596.0" width="3" height="3" fill="#555"/><rect x="4.5" y="634.5" width="3" height="3" fill="#555"/><rect x="19.0" y="653.0" width="3" height="3" fill="#555"/><rect x="9.0" y="663.0" width="3" height="3" fill="#555"/><rect x="29.0" y="663.0" width="3" height="3" fill="#555"/><rect x="19.0" y="673.0" width="3" height="3" fill="#555"/></g></svg>
<!-- v scrollbar -->
<div class="a" style="left:1051px;top:143px;width:17px;height:624px;background:#f0f0f0"></div>
<div class="a" style="left:1052px;top:170px;width:15px;height:17px;background:#cdcdcd"></div>
<!-- right toolbar -->
<div class="a" style="left:1068px;top:143px;width:46px;height:642px;background:#f0f0f0"></div>
<div class="a" style="left:1072px;top:143px;width:41px;height:642px;background:#f5f5f5;border:1px solid #c8c8c8;border-bottom:none"></div>
<svg width="48" height="650" style="left:1066px;top:140px"><g transform="translate(-1066,-140)">
<g fill="#777"><rect x="1077" y="147" width="1" height="1"/><rect x="1078" y="149" width="1" height="1"/><rect x="1079" y="147" width="1" height="1"/><rect x="1080" y="149" width="1" height="1"/><rect x="1081" y="147" width="1" height="1"/><rect x="1082" y="149" width="1" height="1"/><rect x="1083" y="147" width="1" height="1"/><rect x="1084" y="149" width="1" height="1"/><rect x="1085" y="147" width="1" height="1"/><rect x="1086" y="149" width="1" height="1"/><rect x="1087" y="147" width="1" height="1"/><rect x="1088" y="149" width="1" height="1"/><rect x="1089" y="147" width="1" height="1"/><rect x="1090" y="149" width="1" height="1"/></g>
<path d="M1087 173 L1105 155 L1108.5 156 V167 L1094 181 Z" fill="#f3c246"/><path d="M1085 176 L1087 173 L1094 181 L1092 183 Z" fill="#fff"/><path d="M1083 179 L1085 176 L1092 183 L1090 185.5 Q1085 188 1082.5 185 Q1080.5 182 1083 179 Z" fill="#e03a3a"/><path d="M1076 186.5 H1082" stroke="#4a5a6a" stroke-width="1.2"/><path d="M1092 186.5 H1108" stroke="#3a7ab8" stroke-width="1.2"/><g fill="none" stroke-width="1.3"><circle cx="1083.2" cy="200.5" r="7" stroke="#5a5a5a"/><path d="M1092.5 195.6 H1100.8 V201" stroke="#333" stroke-width="1.4"/><path d="M1097 201 H1104.5 L1100.8 206.5 Z" fill="#333" stroke="none"/><circle cx="1090.4" cy="217" r="6.5" stroke="#3a8ad0"/><path d="M1098 212 A6.5 6.5 0 1 1 1098 222" stroke="#3a8ad0"/><path d="M1076.5 261 L1090 233 V261 Z" stroke="#5a5a5a"/><path d="M1093 233 L1106.5 261 H1093 Z" stroke="#3a8ad0"/><path d="M1108 273 H1088 Q1076 273 1076 284 Q1076 295 1088 295 H1108" stroke="#3a8ad0"/><path d="M1108 278 H1089 Q1081 278 1081 284 Q1081 290 1089 290 H1108" stroke="#5a5a5a"/><rect x="1078.5" y="309.5" width="11" height="11" stroke="#5a5a5a"/><rect x="1094.5" y="309.5" width="11" height="11" stroke="#3a8ad0"/><rect x="1078.5" y="325.5" width="11" height="11" stroke="#3a8ad0"/><rect x="1094.5" y="325.5" width="11" height="11" stroke="#3a8ad0"/><path d="M1091.6 384.5 A14 14 0 1 0 1104.5 393" stroke="#333" stroke-width="1.4"/><rect x="1076.5" y="421.5" width="31" height="31" stroke="#3a8ad0"/><rect x="1076.5" y="435.5" width="17" height="17" stroke="#5a5a5a"/><rect x="1076.5" y="459.5" width="15" height="31" stroke="#5a5a5a"/><path d="M1093 459.5 H1097 L1108 490.5 H1093" stroke="#3a8ad0"/><path d="M1076 499.5 H1108" stroke="#4a4a5a" stroke-width="1.4" stroke-dasharray="4 2"/><path d="M1106.5 541 V563" stroke="#5a5a5a"/><path d="M1086 555.5 H1105" stroke="#3a8ad0" stroke-dasharray="3 2"/><path d="M1076 555.5 H1084" stroke="#5a5a5a"/><path d="M1095 578.5 H1077.5 V599.5 H1106.5 V578.5 H1100 M1098.5 575 V582" stroke="#5a5a5a"/><path d="M1085.5 618.5 H1077.5 V638.5 H1106.5 V618.5 H1097 M1085.5 614 V622 M1096.5 614 V622" stroke="#5a5a5a"/><path d="M1076 664.5 H1108" stroke="#5a5a5a"/><path d="M1076.5 706 V719 M1095 687.5 H1108" stroke="#5a5a5a"/><path d="M1076.5 705 L1095 687.5" stroke="#3a8ad0"/><path d="M1076.5 745 V757 M1094 724.5 H1108" stroke="#5a5a5a"/><path d="M1076.5 740 Q1077 724.5 1094 724.5" stroke="#3a8ad0"/><path d="M1076 783 Q1084 760 1094 775 Q1100 785 1106 770 V760" stroke="#3a8ad0"/><path d="M1106 760 V784" stroke="#5a5a5a"/></g><path d="M1091.5 345 L1097 351.5 H1093 V359.5 H1101 V355.5 L1107.5 361 L1101 366.5 V362.5 H1093 V370.5 H1097 L1091.5 377 L1086 370.5 H1090 V362.5 H1082 V366.5 L1075.5 361 L1082 355.5 V359.5 H1090 V351.5 H1086 Z" fill="#333"/><path d="M1090 380 L1097.5 384.5 L1090 389 Z" fill="#333"/><path d="M1085 482.5 H1094" stroke="#333" stroke-width="1.3"/><path d="M1093 478 L1099 482.5 L1093 487 Z" fill="#333"/><path d="M1085 548.5 H1099" stroke="#333" stroke-width="1.4"/><path d="M1098 543.5 L1105 548.5 L1098 553.5 Z" fill="#333"/><path d="M1085.5 660 L1092 664.5 L1085.5 669 Z M1098.5 660 L1092 664.5 L1098.5 669 Z" fill="#2a82d8"/><path d="M1084 505 L1086.5 502.5 L1097.5 515 L1095.5 518.5 Z" fill="#222"/><path d="M1094 497.5 L1097.5 500.5 L1097.5 516 L1094.5 516.5 Z" fill="#222"/><path d="M1095.5 516 L1094 519.5 M1096.5 517 L1099 517.5" stroke="#222" stroke-width="2.2"/><circle cx="1096" cy="516.3" r="1" fill="#eee"/><ellipse cx="1093.6" cy="523.5" rx="2.9" ry="4.2" fill="none" stroke="#222" stroke-width="2"/><ellipse cx="1101.6" cy="520.5" rx="3.1" ry="4" transform="rotate(-40 1101.6 520.5)" fill="none" stroke="#222" stroke-width="2"/></g></svg>
<!-- h scrollbar -->
<div class="a" style="left:46px;top:767px;width:1022px;height:17px;background:#f0f0f0"></div>
<div class="a" style="left:71px;top:768px;width:17px;height:15px;background:#cdcdcd"></div>
<svg width="1114" height="819" style="left:0;top:0">
<path d="M1055.5 155 L1059 151.5 L1062.5 155" fill="none" stroke="#444" stroke-width="2.2"/>
<path d="M1055.5 755 L1059 758.5 L1062.5 755" fill="none" stroke="#444" stroke-width="2.2"/>
<path d="M57 772 L53.5 775.5 L57 779" fill="none" stroke="#444" stroke-width="2.2"/>
<path d="M1040 772 L1043.5 775.5 L1040 779" fill="none" stroke="#444" stroke-width="2.2"/>
</svg>
<!-- bottom bar -->
<div class="a" style="left:0;top:784px;width:1114px;height:28px;background:#d8d8d8"></div>
<div class="a" style="left:0;top:812px;width:1114px;height:5px;background:#f2f2f2"></div>
<div class="a" style="left:0;top:816px;width:1114px;height:1px;background:#c8c8c8"></div>
<div class="a" style="left:602px;top:817px;width:512px;height:2px;background:#000"></div>
<div class="a" style="left:0;top:817px;width:602px;height:2px;background:#f4f4f4"></div>
<svg width="200" height="30" style="left:0;top:784px">
<path d="M12 1 H60 Q57 3 56 8 L54 16 Q53 18 50 18 H20 Q17 18 16 15 L14 6 Q13 2 12 1 Z" fill="#efefef"/>
<path d="M61 1 H112 Q108 3 107 8 L105 16 Q104 18 101 18 H71 Q68 18 67 15 L65 6 Q64 2 61 1 Z" fill="#e0e0e0"/>
<path d="M115 1 H166 Q162 3 161 8 L159 16 Q158 18 155 18 H125 Q122 18 121 15 L119 6 Q118 2 115 1 Z" fill="#e0e0e0"/>
<path d="M172 1 H194 Q191 3 190 8 L189 15 Q188 17 185 17 H178 Q175 17 175 15 L174 6 Q173 2 172 1 Z" fill="#e0e0e0"/>
<path d="M183 6 V14 M179 10 H187" stroke="#555" stroke-width="1.6"/>
</svg>
<div class="t" style="left:24px;top:787px;font-size:12px;color:#2a2a2a;font-weight:bold">模型</div>
<div class="t" style="left:72px;top:787px;font-size:12px;color:#555">布局1</div>
<div class="t" style="left:126px;top:787px;font-size:12px;color:#555">布局2</div>
<!-- status bar -->
<div class="a" style="left:546px;top:786px;width:568px;height:24px;background:#f0f0f0;border-top:1px solid #dcdcdc"></div>
<div class="t" style="left:550px;top:790px;font-size:12px;color:#222;font-weight:bold">模型</div>
<svg width="570" height="30" style="left:544px;top:784px"><g transform="translate(-544,-784)">
<g fill="#d6d6d6">
<rect x="574" y="786" width="4" height="24"/><rect x="638" y="786" width="4" height="24"/>
<rect x="917" y="786" width="4" height="24"/><rect x="957" y="786" width="3" height="24"/><rect x="984" y="786" width="3" height="24"/><rect x="1010" y="786" width="3" height="24"/><rect x="1062" y="786" width="3" height="24"/>
</g>
<g fill="#cfe3f6" stroke="#4f8fc8" stroke-width="1">
<rect x="644.5" y="788.5" width="21" height="20"/>
<rect x="747.5" y="788.5" width="21" height="20"/>
<rect x="771.5" y="788.5" width="21" height="20"/>
<rect x="813.5" y="788.5" width="21" height="20"/>
</g>
<g stroke="#444" stroke-width="1.2" fill="none">
<path d="M583 791 V805 M588 791 V805 M593 791 V805 M580 794.5 H596 M580 798.5 H596 M580 802.5 H596"/>
<path d="M649 792 V804.5 H662 M649 800.5 H653 V804.5"/>
<circle cx="676" cy="799" r="5.5"/><path d="M676 799 L684 791 M671 799 H686"/>
<path d="M754 804 L764 794 M752 804.5 H766"/>
<rect x="774.5" y="791.5" width="15" height="14"/>
<path d="M866 806 L872 792 L878 806 L872 801 Z" fill="#444"/>
</g>
<g fill="#444">
<rect x="606" y="792" width="2" height="2"/><rect x="612" y="792" width="2" height="2"/><rect x="618" y="792" width="2" height="2"/>
<rect x="606" y="797" width="2" height="2"/><rect x="612" y="797" width="2" height="2"/><rect x="618" y="797" width="2" height="2"/>
<rect x="606" y="802" width="2" height="2"/><rect x="612" y="802" width="2" height="2"/><rect x="618" y="802" width="2" height="2"/>
<rect x="773" y="790" width="4" height="4"/><rect x="760" y="797" width="3" height="3"/>
<path d="M629.5 796 H634.5 L632 799 Z M695.5 796 H700.5 L698 799 Z M735 796 H740 L737.5 799 Z M800 796 H805 L802.5 799 Z M907 796 H912 L909.5 799 Z M950 796 H955 L952.5 799 Z"/>
<path d="M816 806 L823 791 L830 806 L823 801 Z M842 806 L848.5 791 L855 806 L848.5 801 Z"/>
</g>
<path d="M711 791 L724 806" stroke="#c83030" stroke-width="1.3"/><path d="M717.5 791 V806" stroke="#3a9a4a" stroke-width="1.2"/><circle cx="717.5" cy="798.5" r="1.6" fill="#333"/>
<circle cx="829.5" cy="793.5" r="2.6" fill="none" stroke="#444" stroke-width="1"/>
<path d="M850 792 L856 795 L853 799" fill="none" stroke="#444" stroke-width="1.3"/>
<text x="889" y="803" font-family="Liberation Sans" font-size="12" fill="#333">1:1</text>
<g transform="translate(931,798.5)"><circle r="4.8" fill="none" stroke="#444" stroke-width="3"/><g stroke="#444" stroke-width="2.6"><path d="M0 -7.5 V7.5 M-7.5 0 H7.5 M-5.3 -5.3 L5.3 5.3 M-5.3 5.3 L5.3 -5.3"/></g><circle r="2" fill="#f0f0f0"/></g>
<path d="M971.5 790.5 V806.5 M963.5 798.5 H979.5" stroke="#444" stroke-width="1.6"/>
<rect x="991.5" y="790.5" width="7" height="7" fill="none" stroke="#444" stroke-width="1.1"/><circle cx="1004" cy="795" r="3.3" fill="none" stroke="#444" stroke-width="1.1"/><path d="M995 806.5 L998.5 800 L1002 806.5 Z" fill="none" stroke="#444" stroke-width="1.1"/>
<rect x="1017" y="791" width="13" height="11" fill="#2a5a9a"/><rect x="1017" y="798" width="6" height="5" fill="#f0a020"/><path d="M1023 803 L1026 806 L1032 799" fill="none" stroke="#3a9a4a" stroke-width="2"/><path d="M1017 796 H1030 M1023 791 V802" stroke="#fff" stroke-width="0.8"/>
<rect x="1040.5" y="790.5" width="15" height="12" fill="none" stroke="#444" stroke-width="1.1"/><path d="M1042 801 L1046 794 L1050 800 L1054 795" fill="none" stroke="#444" stroke-width="1"/><path d="M1051 798 L1056 806.5 H1046 Z" fill="#e8641a"/>
<rect x="1070.5" y="791.5" width="15" height="13" fill="none" stroke="#444" stroke-width="1.1"/><path d="M1073 802 L1078 797 M1073 802 V799 M1073 802 H1076 M1083 794 L1078 799 M1083 794 V797 M1083 794 H1080" fill="none" stroke="#444" stroke-width="1.1"/>
<path d="M1094.5 791.5 H1110.5 M1094.5 798.5 H1110.5 M1094.5 805.5 H1110.5" stroke="#333" stroke-width="1.8"/>
</g></svg>

<!-- command line -->
<div class="a" style="left:330px;top:757px;width:457px;height:10px;background:#a4a4a4"></div>
<div class="a" style="left:330px;top:757px;width:56px;height:10px;background:#9a9fa6"></div>
<div class="a" style="left:330px;top:767px;width:56px;height:16px;background:#d6d6d6"></div>
<div class="a" style="left:386px;top:767px;width:401px;height:16px;background:#f6f6f6"></div>
<div class="a" style="left:656.5px;top:757px;width:1.2px;height:18px;background:#f0f0f0"></div>
<svg width="470" height="40" style="left:320px;top:750px"><g transform="translate(-320,-750)">
<g fill="#6a6a7a"><rect x="334" y="761" width="1.5" height="1.5"/><rect x="337" y="761" width="1.5" height="1.5"/><rect x="334" y="764" width="1.5" height="1.5"/><rect x="337" y="764" width="1.5" height="1.5"/><rect x="334" y="767" width="1.5" height="1.5"/><rect x="337" y="767" width="1.5" height="1.5"/><rect x="334" y="770" width="1.5" height="1.5"/><rect x="337" y="770" width="1.5" height="1.5"/><rect x="334" y="773" width="1.5" height="1.5"/><rect x="337" y="773" width="1.5" height="1.5"/><rect x="334" y="776" width="1.5" height="1.5"/><rect x="337" y="776" width="1.5" height="1.5"/></g>
<path d="M345 765 L352 772 M352 765 L345 772" stroke="#666" stroke-width="1.4"/>
<path d="M366 778 L374 770 M373 765 Q370 768 373 772 Q377 774 379 770 L378.5 767.5 L376.5 769 L375 767.5 L376.5 765.5 Z M366 778 Q365.5 779.5 367 779 L374.5 771.5" fill="none" stroke="#777" stroke-width="1.1"/>
<rect x="390.5" y="765.5" width="15" height="10" fill="none" stroke="#555" stroke-width="1.1"/><path d="M390.5 767.5 H405.5" stroke="#555" stroke-width="1.5"/><path d="M393 769.5 L395 771 L393 772.5 M396 773 H399" fill="none" stroke="#555" stroke-width="0.9"/>
<path d="M407 768.5 H413 L410 772 Z" fill="#666"/>
<path d="M772 772 L776 768 L780 772 Z" fill="#888"/>
</g></svg>
<div class="t" style="left:417px;top:763px;font-size:13px;color:#333">指定拉伸点或 [</div>
<div class="a" style="left:506px;top:761px;width:50px;height:20px;background:#c8c8c8;border-radius:2px;opacity:0.55"></div>
<div class="a" style="left:561px;top:761px;width:50px;height:20px;background:#c8c8c8;border-radius:2px;opacity:0.55"></div>
<div class="a" style="left:615px;top:761px;width:50px;height:20px;background:#c8c8c8;border-radius:2px;opacity:0.55"></div>
<div class="a" style="left:667px;top:761px;width:50px;height:20px;background:#c8c8c8;border-radius:2px;opacity:0.55"></div>
<div class="t" style="left:509px;top:763px;font-size:13px;color:#333">基点<span style="color:#2233aa;font-family:'Liberation Mono'">(B)</span></div>
<div class="t" style="left:562px;top:763px;font-size:13px;color:#333">复制<span style="color:#2233aa;font-family:'Liberation Mono'">(C)</span></div>
<div class="t" style="left:616px;top:763px;font-size:13px;color:#333">放弃<span style="color:#2233aa;font-family:'Liberation Mono'">(U)</span></div>
<div class="t" style="left:668px;top:763px;font-size:13px;color:#333">退出<span style="color:#2233aa;font-family:'Liberation Mono'">(X)</span>]:</div>
<svg width="480" height="45" style="left:318px;top:745px"><rect x="7.5" y="7" width="467" height="35" rx="17" ry="17" fill="none" stroke="#dc2c2c" stroke-width="5"/></svg>
</body></html>
